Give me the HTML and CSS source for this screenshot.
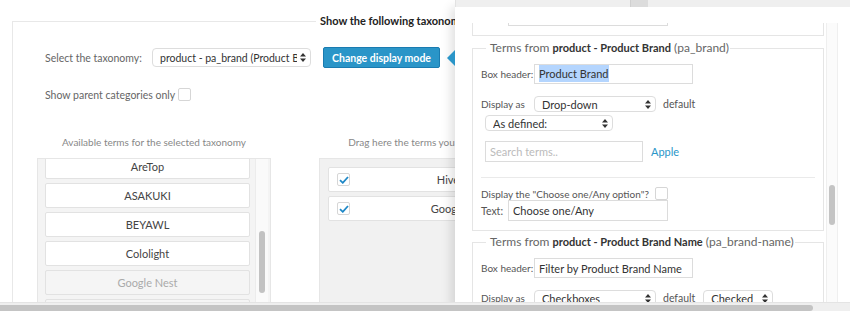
FILE: index.html
```html
<!DOCTYPE html>
<html lang="en">
<head>
    <meta charset="UTF-8">
    <title>Taxonomy terms</title>
    <link rel="stylesheet" href="styles.css">
</head>
<body>

<div class="page">
    <fieldset class="tax-box">
        <legend>Show the following taxonomy terms</legend>

        <div class="row row-taxonomy">
            <label class="row-label">Select the taxonomy:</label>
            <div class="select tax-select">
                <span>product - pa_brand (Product Brand)</span>
                <svg class="arrows" width="6" height="9" viewBox="0 0 6 9"><path d="M3 0L6 3.5H0z M3 9L0 5.5H6z" fill="#333"/></svg>
            </div>
            <button class="btn-primary">Change display mode</button>
        </div>

        <div class="row row-parent">
            <label class="row-label">Show parent categories only</label>
            <span class="checkbox"></span>
        </div>

        <div class="columns">
            <div class="col">
                <p class="col-title">Available terms for the selected taxonomy</p>
                <div class="term-box">
                    <div class="term-items">
                        <div class="term">AreTop</div>
                        <div class="term">ASAKUKI</div>
                        <div class="term">BEYAWL</div>
                        <div class="term">Cololight</div>
                        <div class="term disabled">Google Nest</div>
                        <div class="term disabled">Hive</div>
                    </div>
                    <div class="vscroll"><div class="vscroll-thumb"></div></div>
                </div>
            </div>
            <div class="col">
                <p class="col-title">Drag here the terms you want to display</p>
                <div class="term-box drop-box">
                    <div class="term-items">
                        <div class="term chosen"><span class="checkbox checked"><svg width="10" height="8" viewBox="0 0 10 8"><path d="M1 4.2L3.8 6.8L9 1" fill="none" stroke="#1e88c7" stroke-width="1.8"/></svg></span><span class="term-name">Hive</span></div>
                        <div class="term chosen"><span class="checkbox checked"><svg width="10" height="8" viewBox="0 0 10 8"><path d="M1 4.2L3.8 6.8L9 1" fill="none" stroke="#1e88c7" stroke-width="1.8"/></svg></span><span class="term-name">Google</span></div>
                    </div>
                </div>
            </div>
        </div>
    </fieldset>
</div>

<div class="panel">
    <div class="panel-strip"><span class="strip-thumb"></span></div>
    <span class="pointer"></span>
    <div class="panel-body">
        <div class="panel-scroll">
            <div class="panel-content">
                <fieldset class="terms-set prev-set">
                    <div class="frow">
                        <label class="flabel text-label">Text:</label>
                        <input class="finput text-input" type="text" value="Choose one/Any">
                    </div>
                </fieldset>

                <fieldset class="terms-set">
                    <legend>Terms from <b>product - Product Brand</b> (pa_brand)</legend>
                    <div class="frow">
                        <label class="flabel">Box header:</label>
                        <div class="finput"><span class="selected-text">Product Brand</span></div>
                    </div>
                    <div class="frow row-display">
                        <label class="flabel">Display as</label>
                        <div class="select display-select">
                            <span>Drop-down</span>
                            <svg class="arrows" width="6" height="9" viewBox="0 0 6 9"><path d="M3 0L6 3.5H0z M3 9L0 5.5H6z" fill="#333"/></svg>
                        </div>
                        <span class="default-label">default</span>
                    </div>
                    <div class="select order-select">
                        <span>As defined:</span>
                        <svg class="arrows" width="6" height="9" viewBox="0 0 6 9"><path d="M3 0L6 3.5H0z M3 9L0 5.5H6z" fill="#333"/></svg>
                    </div>
                    <div class="frow row-search">
                        <input class="finput search-input" type="text" placeholder="Search terms..">
                        <a class="term-link" href="#">Apple</a>
                    </div>
                    <hr class="divider">
                    <div class="frow row-any">
                        <label class="flabel">Display the "Choose one/Any option"?</label>
                        <span class="checkbox"></span>
                    </div>
                    <div class="frow row-text">
                        <label class="flabel text-label">Text:</label>
                        <input class="finput text-input" type="text" value="Choose one/Any">
                    </div>
                </fieldset>

                <fieldset class="terms-set">
                    <legend>Terms from <b>product - Product Brand Name</b> (pa_brand-name)</legend>
                    <div class="frow">
                        <label class="flabel">Box header:</label>
                        <input class="finput" type="text" value="Filter by Product Brand Name">
                    </div>
                    <div class="frow row-display">
                        <label class="flabel">Display as</label>
                        <div class="select display-select">
                            <span>Checkboxes</span>
                            <svg class="arrows" width="6" height="9" viewBox="0 0 6 9"><path d="M3 0L6 3.5H0z M3 9L0 5.5H6z" fill="#333"/></svg>
                        </div>
                        <span class="default-label">default</span>
                        <div class="select checked-select">
                            <span>Checked</span>
                            <svg class="arrows" width="6" height="9" viewBox="0 0 6 9"><path d="M3 0L6 3.5H0z M3 9L0 5.5H6z" fill="#333"/></svg>
                        </div>
                    </div>
                </fieldset>
            </div>
            <div class="panel-vscroll"><div class="panel-vscroll-thumb"></div></div>
        </div>
    </div>
</div>

<div class="hscroll"><div class="hscroll-thumb"></div></div>

</body>
</html>
```

FILE: styles.css
```css
body {
    font-family: 'Lato', 'Open Sans', Arial, sans-serif;
    margin: 0;
    background-color: #fff;
    color: #555;
    font-size: 10px;
    overflow: hidden;
    height: 311px;
}
.page {
    width: 850px;
}
.tax-box {
    margin: 13px 0 0 12px;
    padding: 0 0 40px 0;
    border: 1px solid #e8e8e8;
    border-right: none;
    border-bottom: none;
    width: 880px;
}
.tax-box legend {
    margin-left: 303px;
    padding: 0 4px;
    font-size: 11px;
    line-height: 16px;
    font-weight: bold;
    color: #222;
    white-space: nowrap;
}
.row {
    display: flex;
    align-items: center;
    padding-left: 32px;
}
.row-label {
    color: #666;
    font-size: 10.5px;
    white-space: nowrap;
}
.row-taxonomy {
    margin-top: 18px;
    height: 21px;
}
.row-taxonomy .row-label {
    width: 107px;
}
.select {
    display: flex;
    align-items: center;
    justify-content: space-between;
    box-sizing: border-box;
    background: #fff;
    border: 1px solid #ddd;
    border-radius: 4px;
    color: #333;
    font-size: 11px;
    padding: 0 4px 0 7px;
    white-space: nowrap;
    overflow: hidden;
}
.select span {
    overflow: hidden;
}
.arrows {
    flex: none;
    margin-left: 3px;
}
.tax-select {
    width: 159px;
    height: 19px;
    font-size: 10.5px;
}
.btn-primary {
    margin-left: 12px;
    width: 117px;
    height: 21px;
    padding: 0;
    border: 1px solid #1a7bb0;
    border-radius: 2px;
    background-color: #2a95c8;
    color: #fff;
    font-family: 'Lato', 'Open Sans', Arial, sans-serif;
    font-size: 10.5px;
    font-weight: bold;
}
.row-parent {
    margin-top: 20px;
    height: 13px;
}
.checkbox {
    display: inline-flex;
    align-items: center;
    justify-content: center;
    box-sizing: border-box;
    width: 13px;
    height: 13px;
    border: 1px solid #d6d6d6;
    border-radius: 2px;
    background: #fff;
    flex: none;
}
.row-parent .checkbox {
    margin-left: 3px;
}
.columns {
    display: flex;
    gap: 48px;
    padding-left: 24px;
    margin-top: 33px;
}
.col {
    width: 234px;
    flex: none;
}
.col-title {
    margin: 0 0 8px;
    text-align: center;
    line-height: 16px;
    color: #888;
    font-size: 10px;
    white-space: nowrap;
}
.term-box {
    position: relative;
    display: flex;
    box-sizing: border-box;
    height: 160px;
    border: 1px solid #e6e6e6;
    background-color: #f4f4f4;
    overflow: hidden;
}
.term-items {
    padding: 0 0 0 7px;
    margin-top: -5px;
}
.term {
    box-sizing: border-box;
    width: 205px;
    height: 25px;
    margin-bottom: 4px;
    border: 1px solid #e2e2e2;
    border-radius: 2px;
    background: #fff;
    color: #444;
    font-size: 11px;
    line-height: 23px;
    text-align: center;
}
.term.disabled {
    background: #f5f5f5;
    color: #aaa;
}
.vscroll {
    margin-left: 5px;
    width: 12px;
    border-left: 1px solid #ececec;
    background: #fafafa;
}
.vscroll-thumb {
    width: 6px;
    height: 62px;
    margin: 72px 0 0 3px;
    border-radius: 3px;
    background: #c2c2c2;
}
.drop-box {
    background-color: #f1f1f1;
}
.drop-box .term-items {
    margin-top: 8px;
    padding-left: 8px;
}
.term.chosen {
    display: flex;
    align-items: center;
    padding-left: 8px;
    text-align: center;
}
.term-name {
    flex: 1;
    padding-left: 14px;
}
.checkbox.checked svg {
    display: block;
}

/* panel on the right */
.panel {
    position: absolute;
    left: 455px;
    top: 0;
    right: 0;
    bottom: 0;
}
.panel-strip {
    position: relative;
    height: 7px;
    background: #efefef;
    border-left: 1px solid #e2e2e2;
}
.strip-thumb {
    position: absolute;
    left: 174px;
    top: 0;
    width: 17px;
    height: 7px;
    background: #dcdcdc;
    border-left: 1px solid #d0d0d0;
}
.pointer {
    position: absolute;
    left: -8px;
    top: 50px;
    width: 0;
    height: 0;
    border-top: 8px solid transparent;
    border-bottom: 8px solid transparent;
    border-right: 8px solid #2a95c8;
}
.panel-body {
    height: 304px;
    background: #fff;
    box-shadow: -4px 0 10px rgba(0, 0, 0, 0.12);
    padding-top: 16px;
    box-sizing: border-box;
}
.panel-scroll {
    display: flex;
    height: 288px;
    overflow: hidden;
}
.panel-content {
    width: 352px;
    margin-left: 17px;
    flex: none;
}
.terms-set {
    margin: 0 0 3px;
    padding: 0 8px 9px;
    border: 1px solid #e5e5e5;
    min-width: 0;
}
.prev-set {
    margin-top: -18px;
    margin-bottom: 4px;
    border-top: none;
}
.terms-set legend {
    margin-left: 5px;
    padding: 0 1px 0 4px;
    font-size: 12px;
    line-height: 16px;
    color: #666;
    white-space: nowrap;
}
.terms-set legend b {
    font-size: 11px;
    color: #333;
}
.frow {
    display: flex;
    align-items: center;
}
.flabel {
    color: #555;
    font-size: 10px;
    width: 53px;
    flex: none;
    white-space: nowrap;
}
.finput {
    box-sizing: border-box;
    width: 159px;
    height: 20px;
    margin: 0;
    padding: 0 4px;
    border: 1px solid #dcdcdc;
    border-radius: 0;
    font-family: 'Lato', 'Open Sans', Arial, sans-serif;
    font-size: 11px;
    color: #333;
    line-height: 18px;
    background: #fff;
    white-space: nowrap;
}
.terms-set legend + .frow {
    margin-top: 8px;
}
.selected-text {
    background: #b4d5fe;
    padding: 2px 0;
}
.row-display {
    margin-top: 12px;
}
.display-select {
    width: 122px;
    height: 16px;
}
.default-label {
    margin-left: 7px;
    color: #555;
    font-size: 10.5px;
}
.checked-select {
    margin-left: 8px;
    width: 70px;
    height: 16px;
}
.order-select {
    margin: 3px 0 0 4px;
    width: 128px;
    height: 16px;
}
.row-search {
    margin: 10px 0 0 4px;
}
.search-input {
    width: 158px;
    height: 21px;
}
.search-input::placeholder {
    color: #bbb;
}
.term-link {
    margin-left: 8px;
    color: #2a95c8;
    text-decoration: none;
    font-size: 11px;
}
.divider {
    margin: 15px 0 0;
    border: none;
    border-top: 1px solid #eaeaea;
}
.row-any {
    margin-top: 9px;
}
.row-any .flabel {
    width: auto;
    font-size: 10px;
}
.row-any .checkbox {
    margin-left: 6px;
}
.row-text {
    margin-top: 0;
}
.text-label {
    width: 27px;
    font-size: 10.5px;
}
.text-input {
    width: 160px;
    height: 21px;
}
.panel-vscroll {
    margin-left: 2px;
    width: 10px;
    border-left: 1px solid #efefef;
    border-right: 1px solid #efefef;
    background: #fbfbfb;
}
.panel-vscroll-thumb {
    width: 6px;
    height: 40px;
    margin: 162px 0 0 2px;
    border-radius: 3px;
    background: #c4c4c4;
}

/* horizontal scrollbar at the bottom */
.hscroll {
    position: fixed;
    left: 0;
    right: 0;
    bottom: 0;
    height: 8px;
    border-top: 1px solid #e4e4e4;
    background: #efefef;
}
.hscroll-thumb {
    width: 813px;
    height: 6px;
    margin-top: 2px;
    background: #c4c4c4;
    border-radius: 0 3px 3px 0;
}
```
